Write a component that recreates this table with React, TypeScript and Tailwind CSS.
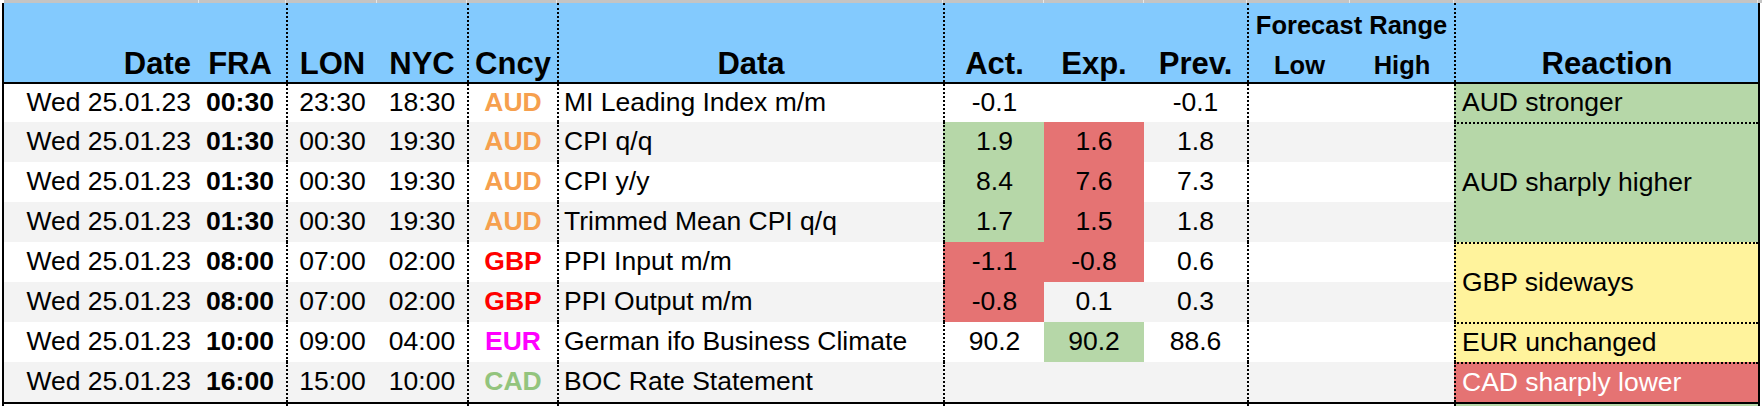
import React from "react";

type Row = {
  fra: string;
  lon: string;
  nyc: string;
  cncy: string;
  cncyColor: string;
  data: string;
  act: string;
  actBg: string;
  exp: string;
  expBg: string;
  prev: string;
};

const GREEN = "bg-[#b6d7a8]";
const RED = "bg-[#e57373]";
const YELLOW = "bg-[#fff39c]";

const COLS =
  "grid grid-cols-[195px_87px_91px_90px_90px_386px_101px_100px_103px_103px_104px_304px]";

const DOT = "border-l-2 border-dotted border-black";

const rows: Row[] = [
  { fra: "00:30", lon: "23:30", nyc: "18:30", cncy: "AUD", cncyColor: "text-[#f6a04e]", data: "MI Leading Index m/m", act: "-0.1", actBg: "", exp: "", expBg: "", prev: "-0.1" },
  { fra: "01:30", lon: "00:30", nyc: "19:30", cncy: "AUD", cncyColor: "text-[#f6a04e]", data: "CPI q/q", act: "1.9", actBg: GREEN, exp: "1.6", expBg: RED, prev: "1.8" },
  { fra: "01:30", lon: "00:30", nyc: "19:30", cncy: "AUD", cncyColor: "text-[#f6a04e]", data: "CPI y/y", act: "8.4", actBg: GREEN, exp: "7.6", expBg: RED, prev: "7.3" },
  { fra: "01:30", lon: "00:30", nyc: "19:30", cncy: "AUD", cncyColor: "text-[#f6a04e]", data: "Trimmed Mean CPI q/q", act: "1.7", actBg: GREEN, exp: "1.5", expBg: RED, prev: "1.8" },
  { fra: "08:00", lon: "07:00", nyc: "02:00", cncy: "GBP", cncyColor: "text-[#ff0000]", data: "PPI Input m/m", act: "-1.1", actBg: RED, exp: "-0.8", expBg: RED, prev: "0.6" },
  { fra: "08:00", lon: "07:00", nyc: "02:00", cncy: "GBP", cncyColor: "text-[#ff0000]", data: "PPI Output m/m", act: "-0.8", actBg: RED, exp: "0.1", expBg: "", prev: "0.3" },
  { fra: "10:00", lon: "09:00", nyc: "04:00", cncy: "EUR", cncyColor: "text-[#ff00ff]", data: "German ifo Business Climate", act: "90.2", actBg: "", exp: "90.2", expBg: GREEN, prev: "88.6" },
  { fra: "16:00", lon: "15:00", nyc: "10:00", cncy: "CAD", cncyColor: "text-[#93c47d]", data: "BOC Rate Statement", act: "", actBg: "", exp: "", expBg: "", prev: "" },
];

const reactions = [
  { text: "AUD stronger", place: "col-start-12 row-start-1", bg: GREEN, color: "text-black", top: "" },
  { text: "AUD sharply higher", place: "col-start-12 row-start-2 row-span-3", bg: GREEN, color: "text-black", top: "border-t-2" },
  { text: "GBP sideways", place: "col-start-12 row-start-5 row-span-2", bg: YELLOW, color: "text-black", top: "border-t-2" },
  { text: "EUR unchanged", place: "col-start-12 row-start-7", bg: YELLOW, color: "text-black", top: "border-t-2" },
  { text: "CAD sharply lower", place: "col-start-12 row-start-8", bg: RED, color: "text-white", top: "border-t-2" },
];

function Header() {
  const main = "flex items-end justify-center pb-[3px] text-[31px] leading-[31px] font-bold";
  return (
    <div className={`${COLS} h-[79px] bg-[#83cafe]`}>
      <div className={`${main} justify-end pr-[8px]`}>Date</div>
      <div className={`${main} pr-[5px]`}>FRA</div>
      <div className={`${main} ${DOT}`}>LON</div>
      <div className={main}>NYC</div>
      <div className={`${main} ${DOT}`}>Cncy</div>
      <div className={`${main} ${DOT}`}>Data</div>
      <div className={`${main} ${DOT}`}>Act.</div>
      <div className={main}>Exp.</div>
      <div className={main}>Prev.</div>
      <div className={`col-span-2 flex flex-col justify-between ${DOT} pt-[9px] pb-[4px] font-bold text-[25.5px] leading-[26px]`}>
        <div className="text-center">Forecast Range</div>
        <div className="grid grid-cols-[101px_104px]">
          <div className="text-center">Low</div>
          <div className="text-center">High</div>
        </div>
      </div>
      <div className={`${main} ${DOT}`}>Reaction</div>
    </div>
  );
}

function Body() {
  return (
    <div className={`${COLS} grid-rows-[38px_repeat(7,40px)] text-[26.5px]`}>
      {reactions.map((r) => (
        <div
          key={r.text}
          className={`${r.place} ${r.bg} ${r.color} ${r.top} ${DOT} border-t-black flex items-center pl-[6px] whitespace-nowrap`}
        >
          {r.text}
        </div>
      ))}
      {rows.map((r, i) => {
        const bg = i % 2 === 0 ? "bg-white" : "bg-[#f3f3f3]";
        const cell = "flex items-center whitespace-nowrap";
        return (
          <React.Fragment key={i}>
            <div className={`${cell} ${bg} justify-end pr-[8px]`}>Wed 25.01.23</div>
            <div className={`${cell} ${bg} justify-center pr-[5px] font-bold`}>{r.fra}</div>
            <div className={`${cell} ${bg} justify-center ${DOT}`}>{r.lon}</div>
            <div className={`${cell} ${bg} justify-center`}>{r.nyc}</div>
            <div className={`${cell} ${bg} justify-center ${DOT} font-bold ${r.cncyColor}`}>{r.cncy}</div>
            <div className={`${cell} ${bg} pl-[5px] ${DOT}`}>{r.data}</div>
            <div className={`${cell} justify-center ${DOT} ${r.actBg || bg}`}>{r.act}</div>
            <div className={`${cell} justify-center ${r.expBg || bg}`}>{r.exp}</div>
            <div className={`${cell} ${bg} justify-center`}>{r.prev}</div>
            <div className={`${cell} ${bg} ${DOT}`}></div>
            <div className={`${cell} ${bg}`}></div>
          </React.Fragment>
        );
      })}
    </div>
  );
}

export default function App() {
  return (
    <div className="w-[1762px] h-[406px] overflow-hidden bg-white text-black font-['Liberation_Sans',Arial,sans-serif]">
      <div className={`${COLS} ml-[4px] h-[3px] bg-[#c4c4c4]`}>
        {Array.from({ length: 12 }, (_, i) => (
          <div key={i} className="border-r border-[#e6e6e6]" />
        ))}
      </div>
      <div className="ml-[2px] w-[1758px] border-x-2 border-black">
        <Header />
        <div className="h-[2px] bg-black" />
        <Body />
        <div className="h-[2px] bg-black" />
        <div className={`${COLS} h-[2px] bg-white`}>
          <div />
          <div />
          <div className={DOT} />
          <div />
          <div className={DOT} />
          <div className={DOT} />
          <div className={DOT} />
          <div />
          <div />
          <div className={`col-span-2 ${DOT}`} />
          <div className={`${DOT} ${GREEN}`} />
        </div>
      </div>
    </div>
  );
}
